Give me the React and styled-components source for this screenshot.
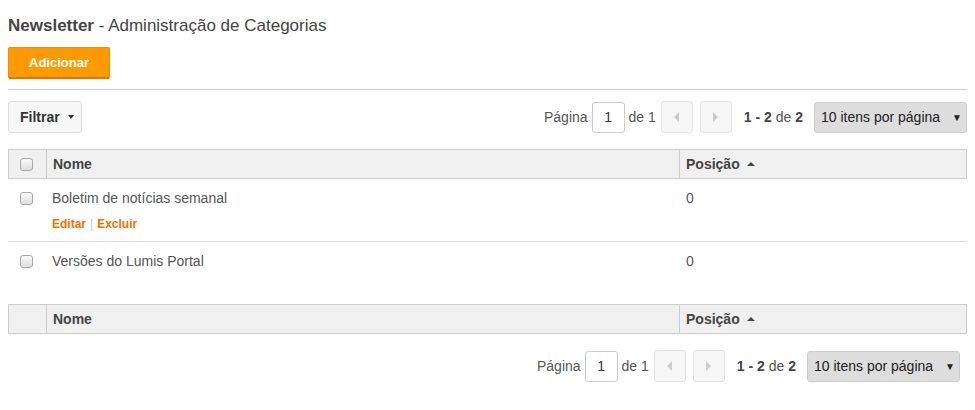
import React from "react";
import styled, { createGlobalStyle } from "styled-components";

const GlobalStyle = createGlobalStyle`
  body {
    margin: 0;
    background: #fff;
    font-family: "Liberation Sans", Arial, sans-serif;
    color: #555;
  }
`;

const Page = styled.div`
  padding: 14px 8px 0 8px;
`;

const Title = styled.h1`
  margin: 0;
  font-size: 17px;
  line-height: 24px;
  font-weight: normal;
  color: #444;
  b {
    font-weight: bold;
  }
`;

const AddButton = styled.button`
  display: block;
  margin-top: 9px;
  width: 102px;
  height: 32px;
  border: 1px solid #f08c00;
  border-bottom: 2px solid #e27600;
  border-radius: 2px;
  background: #ff9900;
  color: #fff;
  font-family: inherit;
  font-weight: bold;
  font-size: 13px;
  padding: 0;
`;

const Divider = styled.hr`
  margin: 10px 0 11px 0;
  border: 0;
  border-top: 1px solid #ccc;
`;

const Toolbar = styled.div`
  display: flex;
  align-items: center;
  justify-content: space-between;
  height: 32px;
`;

const FilterButton = styled.button`
  display: flex;
  align-items: center;
  gap: 8px;
  height: 32px;
  width: 74px;
  padding: 0 0 0 11px;
  border: 1px solid #ddd;
  border-radius: 3px;
  background: #f7f7f7;
  font-family: inherit;
  font-weight: bold;
  font-size: 14px;
  color: #333;
`;

const Caret = styled.span`
  width: 0;
  height: 0;
  border-left: 3px solid transparent;
  border-right: 3px solid transparent;
  border-top: 4px solid #333;
`;

const Pager = styled.div`
  display: flex;
  align-items: center;
  justify-content: flex-end;
  height: 32px;
  font-size: 14px;
  color: #555;
  padding-right: ${(p) => p.$inset || 0}px;
`;

const PageInput = styled.div`
  width: 31px;
  height: 29px;
  margin: 0 4px;
  border: 1px solid #ccc;
  border-radius: 3px;
  display: flex;
  align-items: center;
  justify-content: center;
  color: #333;
`;

const NavButton = styled.div`
  width: 30px;
  height: 30px;
  border: 1px solid #e3e3e3;
  border-radius: 3px;
  background: #f6f6f6;
  display: flex;
  align-items: center;
  justify-content: center;
  margin-left: ${(p) => p.$ml}px;
`;

const Arrow = styled.span`
  width: 0;
  height: 0;
  border-top: 5px solid transparent;
  border-bottom: 5px solid transparent;
  ${(p) =>
    p.$dir === "left"
      ? "border-right: 5px solid #ccc;"
      : "border-left: 5px solid #ccc;"}
`;

const Count = styled.span`
  margin: 0 11px 0 12px;
  color: #555;
  b {
    color: #444;
  }
`;

const PerPage = styled.div`
  height: 29px;
  width: 145px;
  border: 1px solid #ccc;
  border-radius: 3px;
  background: #ddd;
  display: flex;
  align-items: center;
  justify-content: space-between;
  padding: 0 0 0 6px;
  box-sizing: content-box;
  color: #222;
  span {
    font-size: 10px;
    margin-right: 4px;
  }
`;

const Grid = styled.div`
  display: grid;
  grid-template-columns: ${(p) => p.$first || 38}px 633px 1fr;
`;

const HeadRow = styled(Grid)`
  margin-top: ${(p) => p.$mt}px;
  height: 28px;
  background: #f0f0f0;
  border: 1px solid #ccc;
  font-weight: bold;
  font-size: 14px;
  color: #444;
`;

const HeadCell = styled.div`
  display: flex;
  align-items: center;
  gap: 7px;
  padding-left: ${(p) => p.$pl || 0}px;
  border-left: ${(p) => (p.$first ? "none" : "1px solid #ccc")};
`;

const SortUp = styled.span`
  width: 0;
  height: 0;
  border-left: 4px solid transparent;
  border-right: 4px solid transparent;
  border-bottom: 4px solid #444;
`;

const Row = styled(Grid)`
  padding: 10px 0 9px 0;
  border-bottom: ${(p) => (p.$last ? "none" : "1px solid #ddd")};
  font-size: 14px;
  line-height: 18px;
  color: #555;
`;

const Cell = styled.div`
  padding-left: ${(p) => p.$pl || 0}px;
  padding-top: ${(p) => p.$pt || 0}px;
`;

const CheckBox = styled.span`
  display: block;
  width: 11px;
  height: 11px;
  border: 1px solid #aaa;
  border-radius: 3px;
  background: linear-gradient(#fafafa, #dedede);
`;

const Actions = styled.div`
  margin-top: 9px;
  font-size: 12px;
  line-height: 16px;
  font-weight: bold;
  color: #f07000;
  display: flex;
  gap: 4px;
  span {
    color: #ccc;
    font-weight: normal;
  }
`;

const Rows = styled.div`
  padding-bottom: 14px;
`;

const BottomPager = styled.div`
  margin-top: 16px;
`;

const items = [
  { name: "Boletim de notícias semanal", pos: 0, actions: true },
  { name: "Versões do Lumis Portal", pos: 0 },
];

const PagerBar = ({ inset }) => (
  <Pager $inset={inset}>
    Página
    <PageInput>1</PageInput>
    de 1
    <NavButton $ml={5}>
      <Arrow $dir="left" />
    </NavButton>
    <NavButton $ml={7}>
      <Arrow $dir="right" />
    </NavButton>
    <Count>
      <b>1 - 2</b> de <b>2</b>
    </Count>
    <PerPage>
      10 itens por página<span>▼</span>
    </PerPage>
  </Pager>
);

const Header = ({ mt, check }) => (
  <HeadRow $mt={mt} $first={37}>
    <HeadCell $first $pl={11}>
      {check && <CheckBox />}
    </HeadCell>
    <HeadCell $pl={6}>Nome</HeadCell>
    <HeadCell $pl={6}>
      Posição <SortUp />
    </HeadCell>
  </HeadRow>
);

export default function App() {
  return (
    <Page>
      <GlobalStyle />
      <Title>
        <b>Newsletter</b> - Administração de Categorias
      </Title>
      <AddButton>Adicionar</AddButton>
      <Divider />
      <Toolbar>
        <FilterButton>
          Filtrar <Caret />
        </FilterButton>
        <PagerBar />
      </Toolbar>
      <Header mt={16} check />
      <Rows>
        {items.map((it, i) => (
          <Row key={it.name} $last={i === items.length - 1}>
            <Cell $pl={12} $pt={3}>
              <CheckBox />
            </Cell>
            <Cell $pl={6}>
              {it.name}
              {it.actions && (
                <Actions>
                  Editar <span>|</span> Excluir
                </Actions>
              )}
            </Cell>
            <Cell $pl={7}>{it.pos}</Cell>
          </Row>
        ))}
      </Rows>
      <Header mt={11} />
      <BottomPager>
        <PagerBar inset={7} />
      </BottomPager>
    </Page>
  );
}
